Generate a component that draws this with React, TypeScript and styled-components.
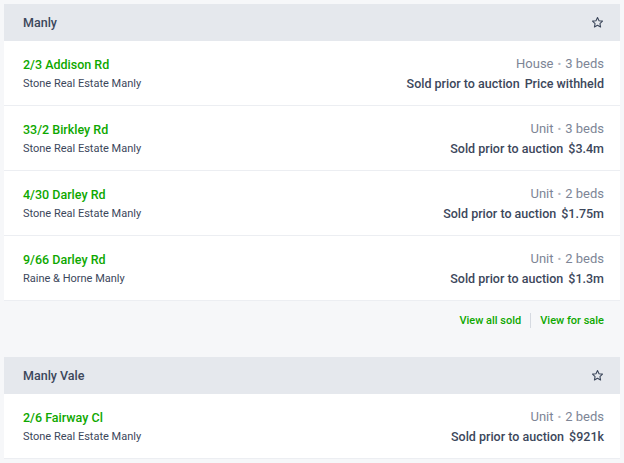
import React from "react";
import styled, { createGlobalStyle } from "styled-components";

const GlobalStyle = createGlobalStyle`
  html, body { margin: 0; padding: 0; background: #f6f7f9; }
  body { font-family: Roboto, "Noto Sans", "Liberation Sans", sans-serif; -webkit-font-smoothing: antialiased; }
  * { box-sizing: border-box; }
`;

const Page = styled.div`
  padding: 4px;
  display: flex;
  flex-direction: column;
  gap: 15px;
`;

const Section = styled.section`
  display: flex;
  flex-direction: column;
`;

const Header = styled.div`
  height: 37px;
  background: #e5e8ed;
  display: flex;
  align-items: center;
  justify-content: space-between;
  padding: 0 16px 0 19px;
`;

const Suburb = styled.h2`
  margin: 0;
  font-size: 12.5px;
  font-weight: 500;
  color: #3c475b;
`;

const StarButton = styled.button`
  border: 0;
  background: transparent;
  padding: 0;
  width: 14px;
  height: 14px;
  display: flex;
  align-items: center;
  justify-content: center;
  color: #3c475b;
`;

const Row = styled.div`
  background: #fff;
  border-bottom: 1px solid #eceef2;
  padding: 14px 16px 13px 19px;
  display: flex;
  justify-content: space-between;
  align-items: center;
`;

const Col = styled.div<{ $right?: boolean }>`
  display: flex;
  flex-direction: column;
  gap: 2px;
  align-items: ${(p) => (p.$right ? "flex-end" : "flex-start")};
`;

const Address = styled.a`
  font-size: 12.5px;
  line-height: 17px;
  font-weight: 500;
  color: #0ea800;
  text-decoration: none;
`;

const Agency = styled.span`
  font-size: 11px;
  line-height: 17px;
  color: #3c475b;
`;

const Meta = styled.span`
  font-size: 13px;
  line-height: 17px;
  color: #7d8596;
`;

const Dot = styled.span`
  margin: 0 4px;
  color: #b3b9c4;
  font-size: 11px;
`;

const Sale = styled.span`
  font-size: 12.5px;
  line-height: 17px;
  font-weight: 500;
  color: #3c475b;
  display: flex;
  gap: 5px;
`;

const Footer = styled.div`
  height: 41px;
  display: flex;
  justify-content: flex-end;
  align-items: center;
  padding: 0 16px 3px 0;
`;

const FooterLink = styled.a`
  font-size: 11px;
  font-weight: 500;
  color: #0ea800;
  text-decoration: none;
`;

const Divider = styled.span`
  width: 1px;
  height: 15px;
  background: #d6dae1;
  margin: 0 9px;
`;

const Star = () => (
  <svg width="13" height="13" viewBox="0 0 24 24" fill="none" stroke="currentColor" strokeWidth="2" strokeLinejoin="round">
    <path d="M12 2.8l2.8 5.9 6.4.8-4.7 4.4 1.2 6.4L12 17.2l-5.7 3.1 1.2-6.4-4.7-4.4 6.4-.8z" />
  </svg>
);

type Listing = { address: string; agency: string; type: string; beds: string; price: string };

const manly: Listing[] = [
  { address: "2/3 Addison Rd", agency: "Stone Real Estate Manly", type: "House", beds: "3 beds", price: "Price withheld" },
  { address: "33/2 Birkley Rd", agency: "Stone Real Estate Manly", type: "Unit", beds: "3 beds", price: "$3.4m" },
  { address: "4/30 Darley Rd", agency: "Stone Real Estate Manly", type: "Unit", beds: "2 beds", price: "$1.75m" },
  { address: "9/66 Darley Rd", agency: "Raine & Horne Manly", type: "Unit", beds: "2 beds", price: "$1.3m" },
];

const manlyVale: Listing[] = [
  { address: "2/6 Fairway Cl", agency: "Stone Real Estate Manly", type: "Unit", beds: "2 beds", price: "$921k" },
];

const ListingRow = ({ l }: { l: Listing }) => (
  <Row>
    <Col>
      <Address href="#">{l.address}</Address>
      <Agency>{l.agency}</Agency>
    </Col>
    <Col $right>
      <Meta>
        {l.type}
        <Dot>•</Dot>
        {l.beds}
      </Meta>
      <Sale>
        <span>Sold prior to auction</span>
        <span>{l.price}</span>
      </Sale>
    </Col>
  </Row>
);

const SuburbSection = ({ name, items, footer }: { name: string; items: Listing[]; footer?: boolean }) => (
  <Section>
    <Header>
      <Suburb>{name}</Suburb>
      <StarButton aria-label="Favourite">
        <Star />
      </StarButton>
    </Header>
    {items.map((l) => (
      <ListingRow key={l.address} l={l} />
    ))}
    {footer && (
      <Footer>
        <FooterLink href="#">View all sold</FooterLink>
        <Divider />
        <FooterLink href="#">View for sale</FooterLink>
      </Footer>
    )}
  </Section>
);

export default function App() {
  return (
    <>
      <GlobalStyle />
      <Page>
        <SuburbSection name="Manly" items={manly} footer />
        <SuburbSection name="Manly Vale" items={manlyVale} />
      </Page>
    </>
  );
}
